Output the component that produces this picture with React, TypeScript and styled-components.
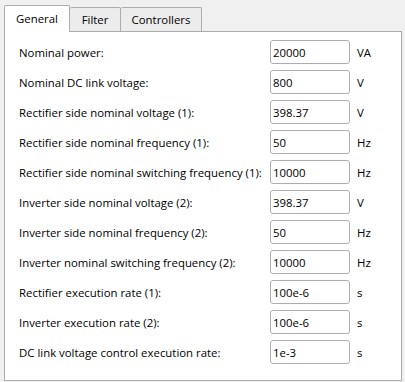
import { Fragment } from 'react';
import styled, { createGlobalStyle } from 'styled-components';

const Global = createGlobalStyle`
  body {
    margin: 0;
    background: #f0f0f0;
    font-family: 'Open Sans', 'Noto Sans', sans-serif;
    font-size: 11.4px;
    color: #000;
  }
`;

const Window = styled.div`
  width: 405px;
  height: 382px;
  background: #f0f0f0;
  padding: 5px 4px 0 4px;
  box-sizing: border-box;
  display: flex;
  flex-direction: column;
`;

const TabStrip = styled.div`
  display: flex;
  align-items: flex-end;
  height: 26px;
`;

const Tab = styled.div<{ $active?: boolean; $width: number }>`
  box-sizing: border-box;
  width: ${p => p.$width}px;
  display: flex;
  align-items: center;
  justify-content: center;
  border: 1px solid #acacac;
  border-bottom: none;
  border-left-width: ${p => (p.$active ? '1px' : '0')};
  border-radius: 2px 2px 0 0;
  background: ${p => (p.$active ? '#ffffff' : '#ececec')};
  height: ${p => (p.$active ? '27px' : '24px')};
  margin-bottom: ${p => (p.$active ? '-1px' : '0')};
  padding-bottom: ${p => (p.$active ? '2px' : '0')};
  position: relative;
  z-index: ${p => (p.$active ? 1 : 0)};
`;

const Panel = styled.div`
  box-sizing: border-box;
  width: 398px;
  height: 350px;
  background: #fff;
  border: 1px solid #acacac;
  padding: 8px 0 0 14px;
  display: grid;
  grid-template-columns: 251px 80px auto;
  grid-auto-rows: 24px;
  row-gap: 6px;
  align-items: center;
`;

const Label = styled.div`
  white-space: nowrap;
`;

const Field = styled.div`
  box-sizing: border-box;
  height: 24px;
  border: 1px solid #abadb3;
  border-radius: 3px;
  padding: 0 2px;
  display: flex;
  align-items: center;
  background: #fff;
`;

const Unit = styled.div`
  padding-left: 7px;
`;

const rows: [string, string, string][] = [
  ['Nominal power:', '20000', 'VA'],
  ['Nominal DC link voltage:', '800', 'V'],
  ['Rectifier side nominal voltage (1):', '398.37', 'V'],
  ['Rectifier side nominal frequency (1):', '50', 'Hz'],
  ['Rectifier side nominal switching frequency (1):', '10000', 'Hz'],
  ['Inverter side nominal voltage (2):', '398.37', 'V'],
  ['Inverter side nominal frequency (2):', '50', 'Hz'],
  ['Inverter nominal switching frequency (2):', '10000', 'Hz'],
  ['Rectifier execution rate (1):', '100e-6', 's'],
  ['Inverter execution rate (2):', '100e-6', 's'],
  ['DC link voltage control execution rate:', '1e-3', 's'],
];

export default function App() {
  return (
    <Window>
      <Global />
      <TabStrip>
        <Tab $active $width={66}>General</Tab>
        <Tab $width={51}>Filter</Tab>
        <Tab $width={81}>Controllers</Tab>
      </TabStrip>
      <Panel>
        {rows.map(([label, value, unit]) => (
          <Fragment key={label}>
            <Label>{label}</Label>
            <Field>{value}</Field>
            <Unit>{unit}</Unit>
          </Fragment>
        ))}
      </Panel>
    </Window>
  );
}
